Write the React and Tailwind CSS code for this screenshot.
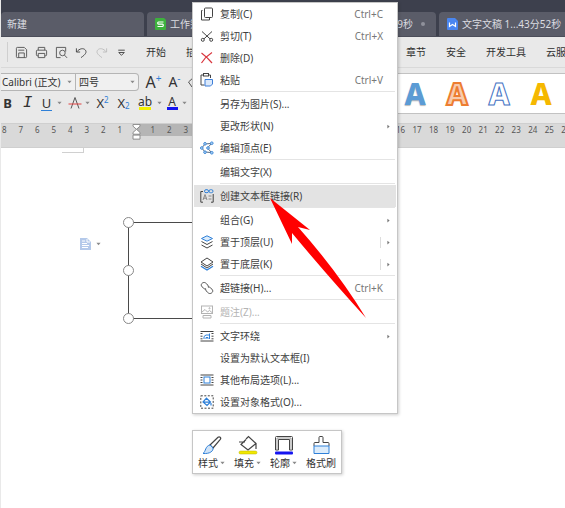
import React from 'react'

const RIBBON_TABS = ['开始', '插入', '页面布局', '引用', '审阅', '视图', '章节', '安全', '开发工具', '云服务']

const RULER = Array.from({ length: 35 }, (_, i) => i - 8)

const MENU = [
  [
    { icon: 'copy', label: '复制(C)', keys: 'Ctrl+C' },
    { icon: 'cut', label: '剪切(T)', keys: 'Ctrl+X' },
    { icon: 'remove', label: '删除(D)' },
    { icon: 'paste', label: '粘贴', keys: 'Ctrl+V' },
  ],
  [
    { label: '另存为图片(S)...' },
    { label: '更改形状(N)', sub: true },
    { icon: 'points', label: '编辑顶点(E)' },
  ],
  [{ label: '编辑文字(X)' }],
  [{ icon: 'textLink', label: '创建文本框链接(R)', active: true }],
  [
    { label: '组合(G)', sub: true },
    { icon: 'front', label: '置于顶层(U)', sub: true, split: true },
    { icon: 'back', label: '置于底层(K)', sub: true, split: true },
  ],
  [{ icon: 'link', label: '超链接(H)...', keys: 'Ctrl+K' }],
  [{ icon: 'caption', label: '题注(Z)...', disabled: true }],
  [
    { icon: 'wrap', label: '文字环绕', sub: true },
    { label: '设置为默认文本框(I)' },
    { icon: 'layout', label: '其他布局选项(L)...' },
    { icon: 'format', label: '设置对象格式(O)...' },
  ],
]

const MENU_ICONS = {
  copy: (
    <g stroke="#444">
      <rect x="4.5" y="1" width="8" height="9.5" rx="1" />
      <path d="M2.5 3.5H1.5V13H9.5V11" />
    </g>
  ),
  cut: (
    <g stroke="#444">
      <path d="M2 2.5L10.2 10M12 2.5L3.8 10" />
      <circle cx="2.8" cy="10.8" r="1.5" />
      <circle cx="11.2" cy="10.8" r="1.5" />
    </g>
  ),
  remove: <path stroke="#d9363e" strokeWidth="1.2" d="M1.5 2C5 4.500 9 8.500 12 12M12 1.500C8 4 4 8 1.500 12" />,
  paste: (
    <g>
      <path stroke="#444" d="M4.500 12H1V2H4M8 2H10.500V5" />
      <rect x="3.500" y="0.500" width="5" height="2.500" stroke="#444" />
      <path stroke="#3f7fd8" fill="#dbe9fb" d="M5 6.500H12.500V11L10.500 13H5Z" />
    </g>
  ),
  points: (
    <g>
      <path stroke="#5a6b80" d="M10.500 2.500L5 3L1.800 7L5 11L11 11.500M11 3L7.500 7L11 11" />
      <g stroke="#3f8ad8" fill="#b8d8f8">
        <circle cx="5" cy="2.800" r="1.300" />
        <circle cx="1.800" cy="7" r="1.300" />
        <circle cx="5" cy="11.200" r="1.300" />
        <circle cx="11.800" cy="2.200" r="1.300" />
        <circle cx="8" cy="7" r="1.300" />
        <circle cx="11.800" cy="11.800" r="1.300" />
      </g>
    </g>
  ),
  textLink: (
    <g>
      <path stroke="#444" d="M3 2.500H0.800V13.200H3M11 13.200H13.200V5" />
      <path stroke="#888" d="M3 11L5 5.500L7 11M3.800 9.200H6.200M8.500 7H11.500M8.500 10H11.500" />
      <rect x="4.500" y="0.700" width="4" height="3" rx="1.500" stroke="#2f80d8" />
      <rect x="9" y="0.700" width="4" height="3" rx="1.500" stroke="#2f80d8" />
    </g>
  ),
  front: (
    <g stroke="#444">
      <path stroke="#2f80d8" fill="#dcecfb" d="M7 0.800L12.500 3.500L7 6.200L1.500 3.500Z" />
      <path d="M1.500 6.500L7 9.500L12.500 6.500M1.500 10L7 13L12.500 10" />
    </g>
  ),
  back: (
    <g stroke="#444">
      <path d="M7 1L13 5L7 9L1 5Z" />
      <path d="M1 7L7 11L13 7" />
      <path stroke="#2f80d8" strokeWidth="1.300" d="M1 9.200L7 13L13 9.200" />
    </g>
  ),
  link: (
    <g stroke="#555">
      <path d="M8.300 6.200C8.800 4.800 7 3 5.500 1.900C3.500 0.500 0.300 2.800 1.500 5L3.500 7.300C4.500 8.200 5.500 8 6 7.500" />
      <path d="M5.700 7.800C5.200 9.200 7 11 8.500 12.100C10.500 13.500 13.700 11.200 12.500 9L10.500 6.700C9.500 5.800 8.500 6 8 6.500" />
    </g>
  ),
  caption: (
    <g stroke="#b4b4b4">
      <rect x="1.500" y="1" width="11" height="7.500" />
      <path d="M2 7L5 4.500L7.500 7L9.500 5.500L12 7.500M3 10.500H11V13H3Z" />
      <circle cx="9.500" cy="3.300" r="0.600" />
    </g>
  ),
  wrap: (
    <g>
      <path stroke="#444" d="M0.500 2.500H13.500M0.500 12H13.500M0.500 4.500H2.500M0.500 7.200H2.500M0.500 9.800H2.500M11.500 4.500H13.500M11.500 7.200H13.500M11.500 9.800H13.500" />
      <path stroke="#2f80d8" d="M4 10V7.500L6 6H9.500V10M6 10V8.500H8V10M9.500 6V4.500" />
    </g>
  ),
  layout: (
    <g>
      <path stroke="#444" d="M0.500 2H13.500M0.500 12H13.500M0.500 4.500H2.500M0.500 7H2.500M0.500 9.500H2.500M11.500 4.500H13.500M11.500 7H13.500M11.500 9.500H13.500" />
      <rect x="4" y="4" width="6" height="6" stroke="#2f80d8" />
    </g>
  ),
  format: (
    <g>
      <rect x="0.800" y="0.800" width="12.400" height="12.400" stroke="#444" strokeDasharray="2 1.500" />
      <path stroke="#2f80d8" strokeWidth="1.200" d="M6.500 3.200L10.500 7L7 10.500L3 7ZM3.200 7.200H10.500M11 8V10.500" />
    </g>
  ),
}

function Icon({ children, className = 'size-[14px]', box = '0 0 14 14' }) {
  return (
    <svg viewBox={box} fill="none" className={`shrink-0 ${className}`} aria-hidden="true">
      {children}
    </svg>
  )
}

function Caret() {
  return (
    <svg viewBox="0 0 6 4" className="w-[5px] h-1 shrink-0" aria-hidden="true">
      <path d="M0.500 0.500H5.500L3 3.500Z" fill="#8a8a8a" />
    </svg>
  )
}

function SheetLogo() {
  return (
    <svg viewBox="0 0 11 12" className="w-[11px] h-3 shrink-0" aria-hidden="true">
      <path d="M1 0H9L11 2V11Q11 12 10 12H1Q0 12 0 11V1Q0 0 1 0Z" fill="#3db13d" />
      <path d="M8.500 4H3.500Q2.700 4 2.700 5T3.500 6.200H7.500Q8.300 6.200 8.300 7.200T7.500 8.500H2.500" fill="none" stroke="#fff" strokeWidth="1.200" />
    </svg>
  )
}

function WriterLogo() {
  return (
    <svg viewBox="0 0 11 12" className="w-[11px] h-3 shrink-0" aria-hidden="true">
      <path d="M1 0H8L11 3V11Q11 12 10 12H1Q0 12 0 11V1Q0 0 1 0Z" fill="#4a86f0" />
      <path d="M2.500 4.500V8.500L5.500 6.500L8.500 8.500V4.500" fill="none" stroke="#fff" strokeWidth="1.200" />
    </svg>
  )
}

function DocumentTabs() {
  const tab = 'flex h-6 w-[143px] shrink-0 items-center gap-1 rounded-t-sm bg-[#5a5c68] whitespace-nowrap'
  return (
    <nav className="flex gap-[3px] overflow-hidden border-b border-[#4b4d59] bg-[#3d404d] pt-3 text-[#dcdde1]">
      <button className={`${tab} pl-[6px]`}>新建</button>
      <button className={`${tab} pl-2`}>
        <SheetLogo />
        工作簿1
      </button>
      <button className={`${tab} pl-2`}>
        <WriterLogo />
        文字文稿 1...
        <span className="ml-auto">39秒</span>
        <span className="mr-[11px] ml-1 size-1 rounded-full bg-[#8f919b]" />
      </button>
      <button className={`${tab} pl-2`}>
        <WriterLogo />
        文字文稿 1...43分52秒
      </button>
    </nav>
  )
}

function QuickButton({ label, children }) {
  return (
    <button aria-label={label} className="flex w-5 shrink-0 justify-center">
      <Icon className="size-[13px]">{children}</Icon>
    </button>
  )
}

function RibbonTabs() {
  return (
    <div className="flex h-[31px] items-center overflow-hidden border-b border-[#d9d9d9] pl-[6px]">
      <span className="mr-[3px] h-5 w-px shrink-0 bg-[#cfcfcf]" />
      <QuickButton label="保存">
        <g stroke="#555">
          <path d="M1.500 2.500Q1.500 1.500 2.500 1.500H10L12.500 4V11.500Q12.500 12.500 11.500 12.500H2.500Q1.500 12.500 1.500 11.500Z" />
          <path d="M3.500 4.500H10M4 12.500V7.500H10V12.500" />
        </g>
      </QuickButton>
      <QuickButton label="打印">
        <g stroke="#555">
          <path d="M3.500 4.500V1.500H10.500V4.500M3.500 10.500H2.500Q1.500 10.500 1.500 9.500V5.500Q1.500 4.500 2.500 4.500H11.500Q12.500 4.500 12.500 5.500V9.500Q12.500 10.500 11.500 10.500H10.500" />
          <path d="M3.500 8H10.500V12.500H3.500Z" />
        </g>
      </QuickButton>
      <QuickButton label="打印预览">
        <g stroke="#555">
          <path d="M6 12.500H1.500V1.500H11.500V6" />
          <circle cx="8" cy="7.500" r="3" />
          <path d="M10.200 9.800L13 12.800" />
        </g>
      </QuickButton>
      <QuickButton label="撤消">
        <path stroke="#444" d="M1.500 2.500V6.500H5.500M1.800 6.300C5 2.500 9 2 11 4.200C13 6.600 11.500 9 6.500 12.500" />
      </QuickButton>
      <QuickButton label="恢复">
        <path stroke="#bcbcbc" d="M12.500 2.500V6.500H8.500M12.200 6.300C9 2.500 5 2 3 4.200C1 6.600 2.500 9 7.500 12.500" />
      </QuickButton>
      <QuickButton label="自定义">
        <path stroke="#444" d="M3.500 4.500H10.500M4 7L7 10L10 7Z" />
      </QuickButton>
      <div className="ml-[15px] flex gap-5 whitespace-nowrap text-[#2f2f2f]">
        {RIBBON_TABS.map((name) => (
          <button key={name}>{name}</button>
        ))}
      </div>
    </div>
  )
}

function Picker({ label, value, className }) {
  return (
    <label className={`relative flex items-center ${className}`}>
      <select aria-label={label} className="h-full w-full appearance-none bg-transparent text-[#333]">
        <option>{value}</option>
      </select>
      <span className="pointer-events-none absolute right-[3px] flex">
        <Caret />
      </span>
    </label>
  )
}

function FormatBar() {
  return (
    <div className="flex h-[55px] items-start justify-between overflow-hidden pt-1">
      <div className="flex shrink-0 flex-col gap-px text-[#333]">
        <div className="flex h-5 items-center">
          <div className="flex h-[18px] w-[138px] rounded-r-sm border border-l-0 border-[#b5b5b5] bg-[#f0f0f0]">
            <Picker label="字体" value="Calibri (正文)" className="w-[75px] border-r border-[#b5b5b5] pl-px" />
            <Picker label="字号" value="四号" className="flex-1 pl-[3px]" />
          </div>
          <button aria-label="增大字号" className="ml-1 flex w-[21px] justify-center text-base leading-5">
            A<span className="text-[10px] leading-3 text-[#2f80d8]">+</span>
          </button>
          <button aria-label="减小字号" className="flex w-[21px] justify-center text-sm leading-5">
            A<span className="text-[10px] leading-3 text-[#2f80d8]">-</span>
          </button>
          <button aria-label="清除格式" className="ml-[2px]">
            <Icon><path stroke="#555" d="M1.500 7L7 2L12 7L7 12H5Z" /></Icon>
          </button>
        </div>
        <div className="flex h-5 items-center text-[13px] leading-4">
          <button aria-label="加粗" className="w-[13px] font-bold">B</button>
          <button aria-label="倾斜" className="w-[27px] font-['Liberation_Mono'] text-base leading-4 italic">I</button>
          <button aria-label="下划线" className="w-[11px] border-b border-[#2f80d8] leading-[14px]">U</button>
          <span className="flex w-[14px] justify-center"><Caret /></span>
          <button aria-label="删除线" className="flex w-[17px] justify-center">
            <Icon><path stroke="#555" d="M3 12.500L7 1.500L11 12.500" /><path stroke="#e04343" d="M0.500 8H13.500" /></Icon>
          </button>
          <span className="flex w-[9px] justify-center"><Caret /></span>
          <button aria-label="上标" className="flex w-[21px] justify-center">
            X<span className="text-[8px] leading-[10px] text-[#2f80d8]">2</span>
          </button>
          <button aria-label="下标" className="flex w-[21px] items-end justify-center">
            X<span className="text-[8px] leading-[10px] text-[#2f80d8]">2</span>
          </button>
          <button aria-label="突出显示" className="ml-1 flex w-[14px] flex-col items-center">
            <span className="text-xs leading-[11px]">ab</span>
            <span className="h-[3px] w-3 bg-[#f3f000]" />
          </button>
          <span className="flex w-[14px] justify-center"><Caret /></span>
          <button aria-label="字体颜色" className="flex w-[12px] flex-col items-center">
            <span className="text-xs leading-[11px]">A</span>
            <span className="h-[3px] w-[11px] bg-[#1414f0]" />
          </button>
          <span className="flex w-[12px] justify-center"><Caret /></span>
        </div>
      </div>
      <div className="mt-px flex h-[41px] w-[171px] shrink-0 items-center border-y border-[#c2c2c2] bg-white text-[30px] leading-8 font-extrabold">
        <button className="w-[42px] text-[#5b9bd5] [text-shadow:0_1px_1px_#bbb]">A</button>
        <button className="w-[42px] text-[#f8cbad] [-webkit-text-stroke:2px_#ed7d31]">A</button>
        <button className="w-[42px] text-white [-webkit-text-stroke:1px_#4472c4]">A</button>
        <button className="w-[42px] text-[#f5b800]">A</button>
      </div>
    </div>
  )
}

function Ruler() {
  return (
    <div className="relative h-[25px] overflow-hidden border-y border-[#cfcfcf] bg-[#d9d9d9]">
      <div className="absolute top-0 left-[136px] h-3 w-[250px] bg-[#b5b5b5]" />
      <div className="relative -ml-[5px] grid w-[578px] grid-cols-[repeat(35,minmax(0,1fr))] text-center text-[8px] leading-[11px] text-[#555]">
        {RULER.map((n) =>
          n === 0 ? (
            <svg key={n} viewBox="0 0 9 18" className="h-4 w-[9px] justify-self-center" preserveAspectRatio="none" aria-hidden="true">
              <path d="M1 0.500H8V2.500L4.500 6L1 2.500ZM4.500 6L8 9.500V11.500H1V9.500ZM1 12.500H8V17H1Z" fill="#fff" stroke="#888" />
            </svg>
          ) : (
            <span key={n}>{Math.abs(n)}</span>
          ),
        )}
      </div>
    </div>
  )
}

function Canvas() {
  const handle = 'absolute -left-[6px] size-[11px] rounded-full border border-[#888] bg-white'
  return (
    <main className="relative flex-1 bg-white">
      <div className="absolute top-0 left-[61px] h-[5px] w-[22px] border-r border-b border-[#d0d0d0]" />
      <div className="absolute top-[90px] left-[79px] flex items-center gap-[5px]">
        <Icon className="h-3 w-[11px]" box="0 0 11 12">
          <path d="M0 0H7L11 4V12H0Z" fill="#b4c9ea" />
          <path d="M2 3H5M2 5.500H7M2 7.500H9M2 9.500H8M7 1V4H10" stroke="#fff" />
        </Icon>
        <Caret />
      </div>
      <div className="absolute top-[74px] left-[127px] h-[97px] w-[200px] border border-[#4a4a4a]">
        <span className={`${handle} -top-[6px]`} />
        <span className={`${handle} top-[42px]`} />
        <span className={`${handle} -bottom-[6px]`} />
      </div>
    </main>
  )
}

function MenuItem({ icon, label, keys, sub, split, active, disabled }) {
  return (
    <button
      role="menuitem"
      disabled={disabled}
      className={`mx-px flex h-[22px] items-center pr-[6px] pl-[6px] text-left ${
        active ? 'bg-[#e3e3e3]' : ''
      } ${disabled ? 'text-[#b4b4b4]' : 'text-[#404040]'}`}
    >
      <Icon>{icon && MENU_ICONS[icon]}</Icon>
      <span className="ml-[6px] flex-1">{label}</span>
      {keys && <span className="mr-[7px] text-[#777]">{keys}</span>}
      {split && <span className="mr-[6px] h-[11px] w-px bg-[#ddd]" />}
      {sub && (
        <svg viewBox="0 0 4 6" className="h-[5px] w-[3px]" aria-hidden="true">
          <path d="M0.500 0.500L3.500 3L0.500 5.500Z" fill="#777" />
        </svg>
      )}
    </button>
  )
}

function ContextMenu() {
  return (
    <div
      role="menu"
      className="absolute top-[2px] left-[192px] flex w-[206px] flex-col border border-[#c6c6c6] bg-white shadow-[1px_1px_3px_rgba(0,0,0,0.2)]"
    >
      {MENU.map((group, i) => (
        <React.Fragment key={i}>
          {i > 0 && <hr className="mr-[2px] mb-px ml-[27px] border-[#e4e4e4]" />}
          {group.map((item) => (
            <MenuItem key={item.label} {...item} />
          ))}
        </React.Fragment>
      ))}
    </div>
  )
}

function MiniTool({ label, caret = true, children }) {
  return (
    <button className="flex flex-col items-center">
      <Icon className="size-5" box="0 0 20 20">{children}</Icon>
      <span className="flex items-center gap-[2px] leading-4">
        {label}
        {caret && <Caret />}
      </span>
    </button>
  )
}

function MiniToolbar() {
  return (
    <div className="absolute top-[430px] left-[192px] flex gap-[9px] border border-[#c6c6c6] bg-white px-[5px] pt-1 pb-[2px] text-[#333] shadow-[1px_1px_3px_rgba(0,0,0,0.2)]">
      <MiniTool label="样式">
        <path stroke="#444" strokeWidth="1.200" d="M8 10L16 2.200C17.500 1 19.500 2.800 18.300 4.300L11 13Z" />
        <path stroke="#2f80d8" fill="#cfe3f8" d="M8 10L11 13C11.500 16 8 19 1 18.500C4 16.500 3 11 8 10Z" />
      </MiniTool>
      <MiniTool label="填充">
        <path stroke="#444" strokeWidth="1.200" d="M8 4L10.500 1.500L18 8.500L10 15L3 9.500L8 4.500M1 7H7M18 8.500V14" />
        <rect x="1" y="16" width="18" height="3" rx="1.500" fill="#f0e800" stroke="#b8b000" strokeWidth="0.500" />
      </MiniTool>
      <MiniTool label="轮廓">
        <path stroke="#444" d="M1.500 15V2.500Q1.500 1.500 2.500 1.500H17.500Q18.500 1.500 18.500 2.500V15H15.500V4.500H4.500V15Z" />
        <path stroke="#999" d="M3 15V3H17V15" />
        <rect x="1" y="16.500" width="18" height="3" rx="1" fill="#1414f0" />
      </MiniTool>
      <MiniTool label="格式刷" caret={false}>
        <path stroke="#444" d="M3 11V8.500Q3 7.500 4 7.500H8V2.500Q8 1.500 9 1.500H11Q12 1.500 12 2.500V7.500H17Q18 7.500 18 8.500V11" />
        <path stroke="#2f80d8" fill="#dcecfb" d="M3 11H18V18.500H3Z" />
      </MiniTool>
    </div>
  )
}

export default function App() {
  return (
    <div className="relative flex min-h-screen flex-col overflow-hidden bg-[#e9e9e9] pl-px font-['Noto_Sans','Noto_Sans_CJK_SC',sans-serif] text-[10px] leading-4">
      <DocumentTabs />
      <RibbonTabs />
      <FormatBar />
      <Ruler />
      <Canvas />
      <ContextMenu />
      <MiniToolbar />
      <svg viewBox="0 0 100 122" className="pointer-events-none absolute top-[198px] left-[268px] h-[122px] w-[100px]" aria-hidden="true">
        <path d="M2 0L42 32L30 29Q70 74 98 120Q58 76 24 35L24 46Z" fill="#f00" />
      </svg>
    </div>
  )
}
